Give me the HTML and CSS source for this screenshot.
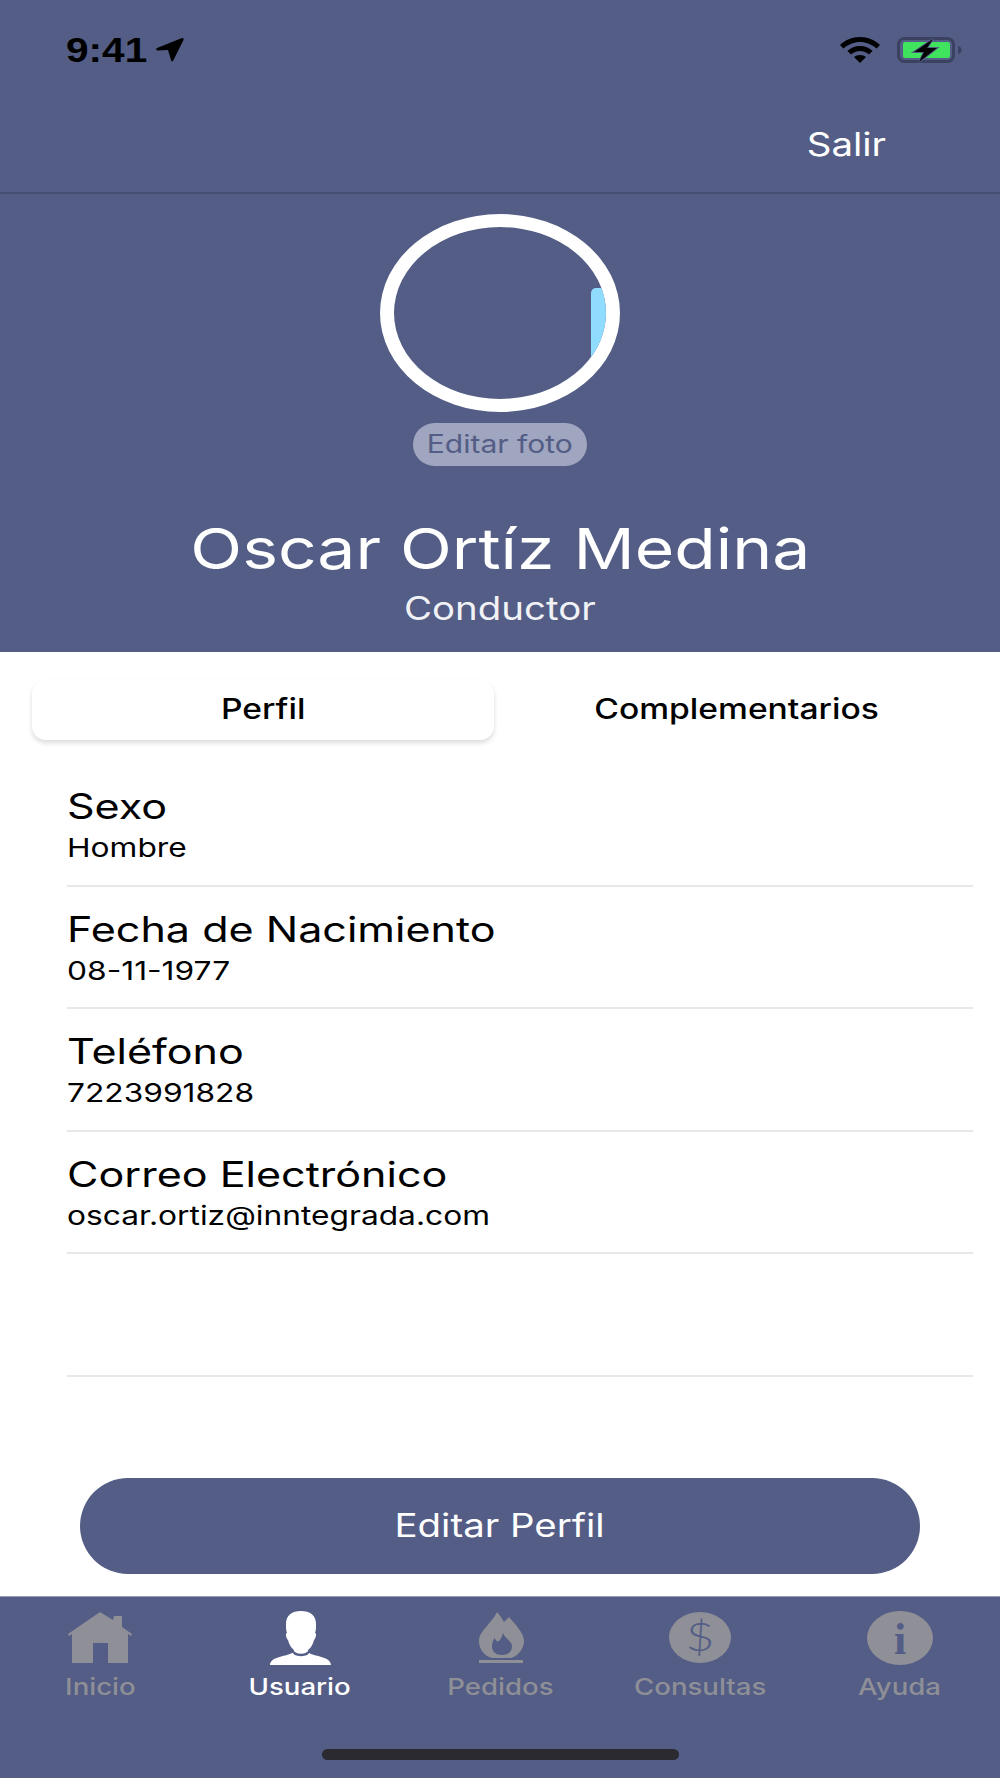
FILE: index.html
```html
<!DOCTYPE html>
<html lang="es">
<head>
    <meta charset="UTF-8">
    <title>Perfil</title>
    <link rel="stylesheet" href="styles.css">
</head>
<body>
    <div class="screen">
        <header class="top">
            <div class="topbar">
                <div class="status">
                    <div class="status-left">
                        <span class="clock">9:41</span>
                        <svg class="arrow" viewBox="0 0 28 24"><path d="M1 10 26 0q2 0 1.500 2L17 23q-1 1-1.800-.5L12 12 1 12.500q-1.500-1.500 0-2.500z"/></svg>
                    </div>
                    <div class="status-right">
                        <svg class="wifi" viewBox="0 0 40 26">
                            <path d="M20 0C12 0 5 3 0 8l3.500 3.500C8 7.500 14 5 20 5s12 2.500 16.500 6.500L40 8C35 3 28 0 20 0z"/>
                            <path d="M20 9c-5 0-9 1.800-12.500 5L11 17.500c2.500-2.300 5.500-3.500 9-3.500s6.500 1.200 9 3.500l3.500-3.500C29 10.800 25 9 20 9z"/>
                            <path d="M20 18c-2.500 0-4.500.8-6 2l6 6 6-6c-1.500-1.200-3.500-2-6-2z"/>
                        </svg>
                        <svg class="battery" viewBox="0 0 65 26">
                            <rect x="1.500" y="1.500" width="55" height="23" rx="6" fill="none" stroke="#3b4160" stroke-width="3"/>
                            <rect x="6" y="5" width="47" height="16" rx="2" fill="#3fe35d"/>
                            <path d="M61 9c2.500.5 3.500 2 3.500 4s-1 3.500-3.500 4z" fill="#3b4160"/>
                            <path d="M36 2 17 15h10l-5 10 18-14H30z" fill="#000" stroke="#535d85" stroke-width="2" paint-order="stroke"/>
                        </svg>
                    </div>
                </div>
                <div class="actions"><a class="logout">Salir</a></div>
            </div>

            <div class="profile">
                <div class="avatar"><div class="avatar-tab"></div></div>
                <div class="edit-photo"><span class="wide">Editar foto</span></div>
                <h1 class="name wide">Oscar Ortíz Medina</h1>
                <div class="role wide">Conductor</div>
            </div>
        </header>

        <main class="content">
            <div class="tabs">
                <div class="tab active"><span class="wide">Perfil</span></div>
                <div class="tab"><span class="wide">Complementarios</span></div>
            </div>

            <div class="rows">
                <div class="row">
                    <div class="row-label">Sexo</div>
                    <div class="row-value">Hombre</div>
                </div>
                <div class="row">
                    <div class="row-label">Fecha de Nacimiento</div>
                    <div class="row-value">08-11-1977</div>
                </div>
                <div class="row">
                    <div class="row-label">Teléfono</div>
                    <div class="row-value">7223991828</div>
                </div>
                <div class="row">
                    <div class="row-label">Correo Electrónico</div>
                    <div class="row-value">oscar.ortiz@inntegrada.com</div>
                </div>
                <div class="row"></div>
            </div>

            <button class="edit-btn"><span class="wide">Editar Perfil</span></button>
        </main>

        <nav class="tabbar">
            <div class="nav-item">
                <svg class="nav-icon" viewBox="0 0 66 54">
                    <path d="M33 1 46 9 47 5h8v11l10 7-1 2-3-2v29H41V32H26v20H5V23l-3 2-1-2z"/>
                </svg>
                <span class="wide">Inicio</span>
            </div>
            <div class="nav-item current">
                <svg class="nav-icon" viewBox="0 0 66 54">
                    <path d="M34 0c9 0 15 4 15 13 0 4 0 7-1 9 2 0 1 5-1 7-1 4-3 8-6 10 0 2 1 3 3 4 8 3 19 3 20 11H3c1-8 12-8 20-11 2-1 4-2 4-4-3-2-5-6-6-10-2-2-3-7-1-7-1-2-1-5-1-9C19 4 25 0 34 0z"/>
                    <path d="M24 38c2 4 6 6 10 6s8-2 10-6" fill="none" stroke="#535d85" stroke-width="2.500"/>
                </svg>
                <span class="wide">Usuario</span>
            </div>
            <div class="nav-item">
                <svg class="nav-icon" viewBox="0 0 66 54">
                    <path d="M30 1c3 3 5 7 7 10l5-5c6 7 15 16 15 24 0 8-6 15-13 17H25c-8-2-13-9-13-17C12 20 25 12 30 1z"/>
                    <rect x="12" y="49" width="44" height="3"/>
                    <path d="M36 22c2 6 9 8 9 13 0 6-4 9-10 9s-10-3-10-9c0-3 1-5 2.500-8 1.500 3 3.500 4 4.500 3 2-2 3-5 4-8z" fill="#535d85"/>
                </svg>
                <span class="wide">Pedidos</span>
            </div>
            <div class="nav-item">
                <svg class="nav-icon" viewBox="0 0 66 54">
                    <ellipse cx="33" cy="26.500" rx="31" ry="25.500"/>
                    <text class="icon-dollar" x="33" y="40" text-anchor="middle">$</text>
                </svg>
                <span class="wide">Consultas</span>
            </div>
            <div class="nav-item">
                <svg class="nav-icon" viewBox="0 0 66 54">
                    <ellipse cx="33" cy="27" rx="33" ry="27"/>
                    <text class="icon-info" x="33" y="43" text-anchor="middle">i</text>
                </svg>
                <span class="wide">Ayuda</span>
            </div>
            <div class="home-bar"></div>
        </nav>
    </div>
</body>
</html>
```

FILE: styles.css
```css
* {
    box-sizing: border-box;
}
body {
    margin: 0;
    font-family: Inter, "Liberation Sans", sans-serif;
    background-color: #fff;
}
.screen {
    width: 1000px;
    height: 1778px;
    display: flex;
    flex-direction: column;
    overflow: hidden;
}
/* the capture is stretched sideways, text follows it */
.wide {
    display: inline-block;
    transform: scaleX(1.2);
}

/* blue header */
.top {
    height: 652px;
    background-color: #535d85;
    color: #fff;
}
.topbar {
    height: 194px;
    border-bottom: 2px solid #484f74;
}
.status {
    display: flex;
    justify-content: space-between;
    align-items: center;
    height: 100px;
    padding: 0 38px 0 66px;
}
.status-left, .status-right {
    display: flex;
    align-items: center;
}
.clock {
    font-family: "Liberation Sans", sans-serif;
    font-weight: bold;
    font-size: 35px;
    color: #000;
    display: inline-block;
    transform: scaleX(1.16);
    transform-origin: left center;
}
.arrow {
    width: 28px;
    height: 24px;
    margin-left: 20px;
}
.wifi {
    width: 40px;
    height: 26px;
}
.battery {
    width: 65px;
    height: 26px;
    margin-left: 17px;
}
.actions {
    display: flex;
    justify-content: flex-end;
    padding-right: 114px;
}
.logout {
    font-size: 32px;
    line-height: 90px;
    transform: scaleX(1.2);
    transform-origin: right center;
}
.profile {
    display: flex;
    flex-direction: column;
    align-items: center;
    padding-top: 20px;
}
.avatar {
    position: relative;
    width: 240px;
    height: 198px;
    border: solid #fff;
    border-width: 13px 14px;
    border-radius: 50%;
    overflow: hidden;
}
.avatar-tab {
    position: absolute;
    left: 197px;
    top: 61px;
    width: 30px;
    height: 90px;
    background-color: #8fdcff;
    border-radius: 5px 0 0 0;
}
.edit-photo {
    width: 174px;
    height: 43px;
    margin-top: 11px;
    border-radius: 22px;
    background-color: #a0a5c0;
    color: #535d85;
    font-size: 25px;
    line-height: 43px;
    text-align: center;
}
.name {
    margin: 47px 0 0;
    font-size: 56.500px;
    font-weight: 400;
    line-height: 72px;
}
.role {
    font-size: 32px;
    line-height: 40px;
    margin-top: 4px;
    color: #f1f2f6;
}

/* white part */
.content {
    flex: 1;
    display: flex;
    flex-direction: column;
    align-items: stretch;
}
.tabs {
    display: flex;
    margin: 28px 20px 0 32px;
}
.tab {
    flex: 1;
    height: 60px;
    font-size: 28px;
    font-weight: 500;
    line-height: 58px;
    text-align: center;
    color: #000;
    border-radius: 14px;
}
.tab.active {
    flex: none;
    width: 462px;
    background-color: #fff;
    box-shadow: 0 3px 5px rgba(0, 0, 0, 0.14);
}
.rows {
    margin: 24px 27px 0 67px;
}
.row {
    height: 122.500px;
    padding-top: 18px;
    border-bottom: 2px solid #e8e8ea;
}
.row-label {
    font-size: 35px;
    line-height: 48px;
    color: #000;
    transform: scaleX(1.23);
    transform-origin: left center;
}
.row-value {
    font-size: 26px;
    line-height: 36px;
    color: #000;
    transform: scaleX(1.22);
    transform-origin: left center;
}
.edit-btn {
    display: block;
    width: 840px;
    height: 96px;
    margin: 101px auto 0;
    border: none;
    border-radius: 48px;
    background-color: #535d85;
    color: #fff;
    font-family: inherit;
    font-size: 32px;
}

/* bottom nav */
.tabbar {
    position: relative;
    height: 182px;
    display: flex;
    background-color: #535d85;
    border-top: 1px solid #9a9fb5;
}
.nav-item {
    width: 200px;
    display: flex;
    flex-direction: column;
    align-items: center;
    padding-top: 14px;
    color: #8e8f97;
    fill: #8e8f97;
    font-size: 23px;
    font-weight: 500;
}
.nav-item.current {
    color: #fff;
    fill: #fff;
}
.nav-icon {
    width: 66px;
    height: 54px;
    margin-bottom: 8px;
}
.icon-dollar {
    font-family: Lato, sans-serif;
    font-weight: 300;
    font-size: 40px;
    fill: #535d85;
    transform-box: fill-box;
    transform-origin: center;
    transform: scaleX(1.25);
}
.icon-info {
    font-family: "Liberation Serif", serif;
    font-weight: bold;
    font-size: 44px;
    fill: #535d85;
}
.home-bar {
    position: absolute;
    left: 322px;
    bottom: 18px;
    width: 357px;
    height: 11px;
    border-radius: 6px;
    background-color: #2a2a30;
}
```
